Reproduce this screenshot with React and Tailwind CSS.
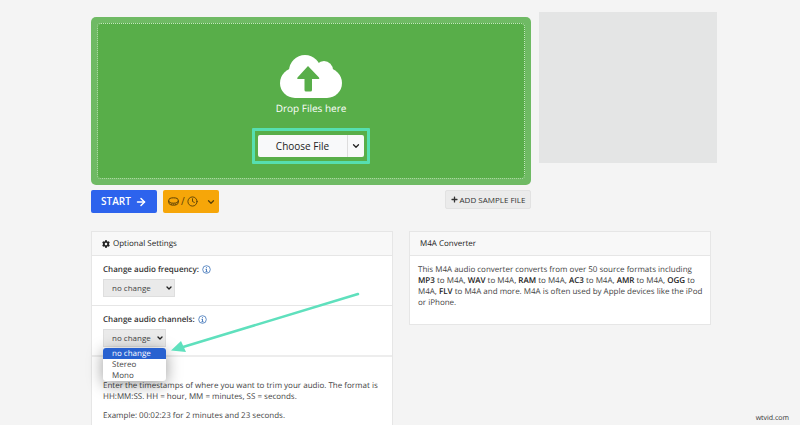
import { Fragment } from "react";
import { ArrowRight, ChevronDown, Clock } from "lucide-react";
import { FaCog, FaPlus } from "react-icons/fa";

const formats = ["MP3", "WAV", "RAM", "AC3", "AMR", "OGG", "FLV"];

const CloudUpload = () => (
  <svg className="h-[44px] w-[64px]" viewBox="0 0 64 44" aria-hidden="true">
    <g fill="#fff">
      <circle cx="26" cy="17" r="16" />
      <circle cx="45" cy="16" r="9" />
      <circle cx="16" cy="29" r="15" />
      <circle cx="48" cy="29" r="15" />
      <path d="M16 18H48V44H16z" />
    </g>
    <path
      d="M29 12 40 23.5Q41 25 39.5 25H33V36Q33 37.5 31.5 37.5H27Q25.5 37.5 25.5 36V25H19Q17.500 25 18.500 23.500z"
      fill="#58ae49"
    />
  </svg>
);

const DiskIcon = () => (
  <svg className="h-[9px] w-[11px]" viewBox="0 0 11 9" fill="none" stroke="currentColor" aria-hidden="true">
    <ellipse cx="5.500" cy="3.500" rx="4.800" ry="2.700" />
    <path d="M.7 3.500V5.500C.7 9.100 10.300 9.100 10.300 5.500V3.500" />
    <path d="M3.500 6.500v1.500M5.500 6.500v1.500M7.500 6.500v1.500" strokeWidth=".6" />
  </svg>
);

const InfoIcon = () => (
  <svg className="h-[9px] w-[9px]" viewBox="0 0 9 9" fill="none" stroke="#3d73b9" aria-hidden="true">
    <circle cx="4.500" cy="4.500" r="3.800" strokeWidth=".8" />
    <path d="M4.500 4v2.700M4.500 2.200v1M3.500 4.300h1M3.500 6.700h2" strokeWidth=".9" />
  </svg>
);

const SettingSelect = ({ id, label, width, children }) => (
  <div className="px-[11px] pt-2">
    <div className="flex items-center gap-[3px]">
      <label htmlFor={id} className="text-[8px] leading-[11px] font-semibold text-[#333]">
        {label}
      </label>
      <InfoIcon />
    </div>
    <div className={`relative mt-1 ${width}`}>
      <select
        id={id}
        className="block h-[18px] w-full appearance-none border border-[#dedede] bg-[#eaeaea] pl-2 text-[8px] leading-[16px] text-[#444]"
      >
        <option>no change</option>
        <option>Stereo</option>
        <option>Mono</option>
      </select>
      <ChevronDown
        className="pointer-events-none absolute top-[5px] right-[2px] h-[8px] w-[8px] text-[#222]"
        strokeWidth={4}
      />
      {children}
    </div>
  </div>
);

const ChannelMenu = () => (
  <ul
    role="listbox"
    aria-label="Audio channels"
    className="absolute top-[19px] left-0 z-10 w-full overflow-hidden rounded-[3px] bg-white text-[8px] leading-[11px] text-[#444] shadow-[0_3px_16px_rgba(0,0,0,0.4)]"
  >
    <li role="option" aria-selected="true" className="bg-[#2861d0] pl-[9px] text-white">
      no change
    </li>
    <li role="option" aria-selected="false" className="pl-[9px]">
      Stereo
    </li>
    <li role="option" aria-selected="false" className="pl-[9px]">
      Mono
    </li>
  </ul>
);

const DropZone = () => (
  <div className="rounded-[5px] bg-[#6fba64] p-[6px]">
    <div className="flex h-[156px] flex-col items-center rounded-[4px] border border-dotted border-[#c4e6be] bg-[#58ae49] pt-[30px]">
      <CloudUpload />
      <p className="mt-[3px] text-[10px] leading-[14px] text-white">Drop Files here</p>
      <div className="mt-[13px] flex rounded-[1px] border-[3px] border-[#56dfb0] px-[3px] py-[4px]">
        <button type="button" className="h-[22px] w-[89px] rounded-l-[2px] bg-[#f8f9fa] text-[10px] font-medium text-[#222]">
          Choose File
        </button>
        <button
          type="button"
          aria-label="More sources"
          className="flex w-[17px] items-center justify-center rounded-r-[2px] border-l border-[#ddd] bg-[#f8f9fa] text-[#222]"
        >
          <ChevronDown className="h-[10px] w-[10px]" strokeWidth={3} />
        </button>
      </div>
    </div>
  </div>
);

const Toolbar = () => (
  <div className="mt-[5px] flex items-start">
    <button
      type="button"
      className="flex h-[23px] w-[66px] items-center justify-center gap-1 rounded-[2px] bg-[#2d63ed] text-[10px] font-semibold text-white"
    >
      START
      <ArrowRight className="h-[12px] w-[12px]" strokeWidth={3} />
    </button>
    <button
      type="button"
      aria-label="File size and duration"
      className="ml-[6px] flex h-[23px] w-[56px] items-center rounded-[2px] bg-[#f6a609] pl-[5px] text-[10px] text-[#5a4108]"
    >
      <DiskIcon />
      <span className="mx-[2px]">/</span>
      <Clock className="h-[11px] w-[11px]" strokeWidth={2} />
      <ChevronDown className="ml-2 h-[10px] w-[10px]" strokeWidth={3} />
    </button>
    <button
      type="button"
      className="ml-auto flex h-[19px] w-[86px] items-center justify-center gap-[2px] rounded-[2px] border border-[#e2e2e2] bg-[#ebebeb] text-[8px] whitespace-nowrap text-[#333]"
    >
      <FaPlus className="h-[7px] w-[7px]" />
      ADD SAMPLE FILE
    </button>
  </div>
);

const CardHeader = ({ children }) => (
  <h2 className="flex h-[24px] items-center gap-[3px] border-b border-[#e6e6e6] bg-[#f8f8f8] px-[10px] text-[8px] font-medium text-[#222]">
    {children}
  </h2>
);

const PointerArrow = () => (
  <svg
    className="pointer-events-none absolute top-[60px] left-[79px] z-20 h-[64px] w-[190px]"
    viewBox="0 0 190 64"
    fill="none"
    aria-hidden="true"
  >
    <path d="M187 2 12 55" stroke="#5fe0bd" strokeWidth="2.500" strokeLinecap="round" />
    <path d="M0 58.500 10 49 15 60z" fill="#5fe0bd" />
  </svg>
);

const App = () => {
  return (
    <div className="relative h-screen overflow-hidden bg-[#f4f4f4] pl-[91px] font-['Open_Sans','Noto_Sans',sans-serif] [text-rendering:geometricPrecision]">
      <div className="flex gap-2 pr-[83px]">
        <main className="flex-1 pt-[17px]">
          <DropZone />
          <Toolbar />
        </main>
        <aside className="mt-3 h-[151px] w-[178px] bg-[#e4e5e5]" />
      </div>

      <div className="mt-[18px] grid grid-cols-2 items-start gap-4 pr-[89px]">
        <section className="relative h-[220px] border border-[#e6e6e6] bg-white">
          <CardHeader>
            <FaCog className="h-[8px] w-[8px]" />
            Optional Settings
          </CardHeader>
          <form>
            <div className="h-[50px] border-b border-[#e6e6e6]">
              <SettingSelect id="frequency" label="Change audio frequency:" width="w-[72px]" />
            </div>
            <div className="h-[51px] border-b-2 border-[#ededed]">
              <SettingSelect id="channels" label="Change audio channels:" width="w-[63px]">
                <ChannelMenu />
              </SettingSelect>
            </div>
            <div className="px-[11px] pt-[23px] text-[8px] leading-[11px] text-[#444]">
              <p>
                Enter the timestamps of where you want to trim your audio. The format is HH:MM:SS. HH = hour, MM =
                minutes, SS = seconds.
              </p>
              <p className="mt-2">Example: 00:02:23 for 2 minutes and 23 seconds.</p>
            </div>
          </form>
          <PointerArrow />
        </section>

        <section className="border border-[#e6e6e6] bg-white">
          <CardHeader>M4A Converter</CardHeader>
          <p className="pt-2 pr-1 pb-4 pl-2 text-[8px] leading-[11px] text-[#444]">
            This M4A audio converter converts from over 50 source formats including{" "}
            {formats.map((format, i) => (
              <Fragment key={format}>
                <b className="font-semibold text-[#222]">{format}</b>
                {i < formats.length - 1 ? " to M4A, " : " to M4A "}
              </Fragment>
            ))}
            and more. M4A is often used by Apple devices like the iPod or iPhone.
          </p>
        </section>
      </div>

      <span className="absolute right-[11px] bottom-[1px] text-[7px] leading-[10px] text-[#333]">wtvid.com</span>
    </div>
  );
};

export default App;
